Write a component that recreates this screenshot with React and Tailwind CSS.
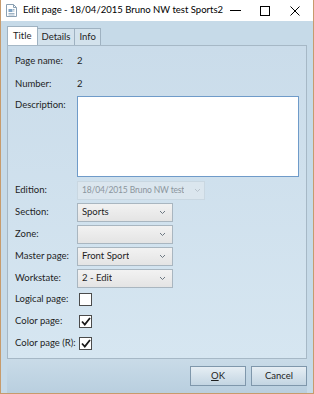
import React from 'react';

const font = { fontFamily: 'Lato, "Noto Sans", sans-serif' };

const Chevron = ({ dim }) => (
  <svg width="7" height="5" viewBox="0 0 7 5" className={`shrink-0 ${dim ? 'text-[#b9c3cc]' : 'text-[#6d7882]'}`}>
    <path d="M1 1 L3.5 3.5 L6 1" fill="none" stroke="currentColor" strokeWidth="1" />
  </svg>
);

const Combo = ({ value, width, disabled }) => (
  <div
    className={`flex h-[19px] items-center justify-between gap-[2px] border pl-[4px] ${width} ${
      disabled
        ? 'border-[#c9d7e1] bg-[#dbe6ee] pr-[3px] text-[#8b959d]'
        : 'border-[#a9b6c0] bg-gradient-to-b from-[#f2f2f2] to-[#e4e4e4] pr-[6px] text-[#1e1e1e]'
    }`}
  >
    <span className={`min-w-0 overflow-hidden whitespace-nowrap ${disabled ? 'text-[8.5px] tracking-[-0.15px]' : ''}`}>{value}</span>
    <Chevron dim={disabled} />
  </div>
);

const Check = ({ checked }) => (
  <div className="flex h-[13px] w-[13px] items-center justify-center border border-[#4b4b4b] bg-white">
    {checked && (
      <svg width="10" height="9" viewBox="0 0 10 9">
        <path d="M1 4.5 L3.8 7.5 L9 1" fill="none" stroke="#1a1a1a" strokeWidth="1.8" />
      </svg>
    )}
  </div>
);

const Row = ({ label, children, h = 'h-[22px]' }) => (
  <div className={`flex items-center ${h}`}>
    <span className="w-[62px] shrink-0 whitespace-nowrap">{label}</span>
    {children}
  </div>
);

export default function App() {
  return (
    <div style={font} className="flex h-[394px] w-[314px] flex-col border border-t-0 border-[#c79b6c] bg-[#c6dae8] text-[9.5px] text-[#1e1e1e]">
      {/* Title bar */}
      <div className="flex h-[21px] shrink-0 items-center bg-white pl-[5px] pr-[3px]">
        <svg width="11" height="13" viewBox="0 0 11 13" className="shrink-0">
          <path d="M0.5 0.5 H7.5 L10.5 3.5 V12.5 H0.5 Z" fill="#fff" stroke="#8aa0b3" />
          <path d="M7.5 0.5 V3.5 H10.5" fill="none" stroke="#8aa0b3" />
          <rect x="2.5" y="5" width="4" height="3" fill="#7ea3c4" />
          <path d="M2.5 9.5 H8.5 M2.5 11 H8.5 M7 5.5 H8.5 M7 7 H8.5" stroke="#9fb3c4" />
        </svg>
        <span className="ml-[6px] min-w-0 whitespace-nowrap text-[9.5px] text-black">Edit page - 18/04/2015 Bruno NW test Sports2</span>
        <div className="ml-auto flex h-full shrink-0 items-center">
          <div className="flex w-[30px] shrink-0 justify-center">
            <div className="h-[1px] w-[11px] bg-black" />
          </div>
          <div className="flex w-[30px] shrink-0 justify-center">
            <div className="h-[10px] w-[10px] border border-black" />
          </div>
          <div className="flex w-[30px] shrink-0 justify-center">
            <svg width="10" height="10" viewBox="0 0 10 10">
              <path d="M0.5 0.5 L9.5 9.5 M9.5 0.5 L0.5 9.5" stroke="#000" strokeWidth="1" />
            </svg>
          </div>
        </div>
      </div>

      {/* Tabs */}
      <div className="flex flex-1 flex-col px-[6px] pt-[5px]">
        <div className="flex h-[19px] items-end">
          <div className="flex h-[19px] items-center border border-b-0 border-[#9fb2c1] bg-white px-[5px]">Title</div>
          <div className="flex h-[17px] items-center border border-l-0 border-b-0 border-[#9fb2c1] bg-[#d3e2ec] px-[4px]">Details</div>
          <div className="flex h-[17px] items-center border border-l-0 border-b-0 border-[#9fb2c1] bg-[#d3e2ec] px-[4px]">Info</div>
        </div>
        <div className="flex h-[314px] flex-col border border-[#a6b8c6] bg-gradient-to-b from-[#cadcea] to-[#d6e6f1] px-[7px] pt-[4px]">
          <Row label="Page name:" h="h-[23px]">
            <span>2</span>
          </Row>
          <Row label="Number:" h="h-[23px]">
            <span>2</span>
          </Row>
          <div className="flex">
            <span className="w-[62px] shrink-0 pt-[2px]">Description:</span>
            <div className="h-[81px] flex-1 border border-[#6f9bc9] bg-white" />
          </div>
          <div className="mt-[2px] flex flex-col">
            <Row label="Edition:">
              <Combo value="18/04/2015 Bruno NW test" width="w-[128px]" disabled />
            </Row>
            <Row label="Section:">
              <Combo value="Sports" width="w-[96px]" />
            </Row>
            <Row label="Zone:">
              <Combo value="" width="w-[96px]" />
            </Row>
            <Row label="Master page:">
              <Combo value="Front Sport" width="w-[96px]" />
            </Row>
            <Row label="Workstate:">
              <Combo value="2 - Edit" width="w-[96px]" />
            </Row>
            <Row label="Logical page:" h="h-[21px]">
              <span className="ml-[2px]"><Check /></span>
            </Row>
            <Row label="Color page:">
              <span className="ml-[2px]"><Check checked /></span>
            </Row>
            <Row label="Color page (R):">
              <span className="ml-[2px]"><Check checked /></span>
            </Row>
          </div>
        </div>

        {/* Buttons */}
        <div className="flex flex-1 items-center justify-end gap-[5px] bg-gradient-to-b from-[#c9dbe8] to-[#b9cfdf]">
          <button className="h-[20px] w-[56px] border border-[#7f97ab] bg-gradient-to-b from-[#e6eef4] to-[#c3d5e2] text-[9.5px]">
            <span className="underline">O</span>K
          </button>
          <button className="h-[20px] w-[56px] border border-[#7f97ab] bg-gradient-to-b from-[#e6eef4] to-[#c3d5e2] text-[9.5px]">
            Cancel
          </button>
        </div>
      </div>
    </div>
  );
}
